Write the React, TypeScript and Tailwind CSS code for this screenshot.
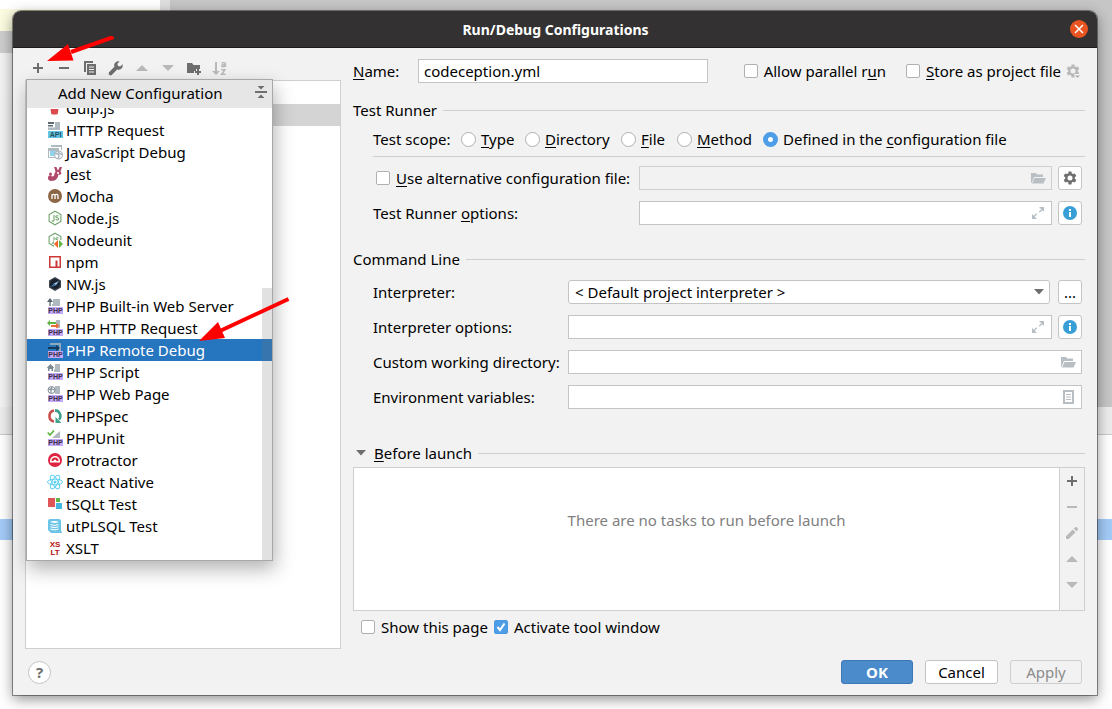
import type { ReactNode } from 'react';

function Svg({ children, className = '', size = 16 }: { children: ReactNode; className?: string; size?: number }) {
  return (
    <svg width={size} height={size} viewBox="0 0 16 16" fill="none" aria-hidden="true" className={`shrink-0 ${className}`}>
      {children}
    </svg>
  );
}

/* ---------- toolbar icons ---------- */

const PlusIcon = () => (
  <Svg><path d="M7 3h2v4h4v2H9v4H7V9H3V7h4z" fill="currentColor" /></Svg>
);
const MinusIcon = () => (
  <Svg><path d="M3 7h10v2H3z" fill="currentColor" /></Svg>
);
const CopyIcon = () => (
  <Svg>
    <path d="M2 1h9v2H4v9H2z" fill="currentColor" />
    <path fillRule="evenodd" d="M5 4h9v11H5zM7 6.5v1h5v-1zM7 9v1h5V9zM7 11.5v1h5v-1z" fill="currentColor" />
  </Svg>
);
const WrenchIcon = () => (
  <Svg>
    <path d="M14.5 4.3l-2.3 2.2-2.2-.6-.6-2.2 2.2-2.3a4.2 4.2 0 0 0-5.2 5.4L1.300 12a1.900 1.900 0 0 0 2.700 2.700L9.200 9.600a4.200 4.200 0 0 0 5.300-5.300z" fill="currentColor" />
  </Svg>
);
const UpIcon = () => (
  <Svg><path d="M8 5l6 6H2z" fill="currentColor" /></Svg>
);
const DownIcon = () => (
  <Svg><path d="M8 11L2 5h12z" fill="currentColor" /></Svg>
);
const FolderAddIcon = () => (
  <Svg>
    <path d="M1 3h5l1.500 2H14v4h-4v2H8v2H1z" fill="currentColor" />
    <path d="M11 9h2v2h2v2h-2v2h-2v-2H9v-2h2z" fill="currentColor" />
  </Svg>
);
const SortIcon = () => (
  <Svg>
    <path d="M3 2h2v9h3l-4 4-4-4h3z" fill="currentColor" />
    <path d="M9.500 2.700h2.800c.8 0 1.200.4 1.200 1.100V7M13.500 4.700h-2.700c-1.600 0-1.600 2 0 2 1.300 0 2.200-.5 2.700-1" stroke="currentColor" strokeWidth="1.400" />
    <path d="M9.300 9.700h3.700l-3.400 4.600h4" stroke="currentColor" strokeWidth="1.400" />
  </Svg>
);
const PencilIcon = () => (
  <Svg>
    <path d="M2 11.300V14h2.700l6.800-6.800-2.700-2.700zM9.800 3.500l2.700 2.700 1.300-1.300c.4-.4.4-1 0-1.400l-1.300-1.300c-.4-.4-1-.4-1.400 0z" fill="currentColor" />
  </Svg>
);
const FolderOpenIcon = () => (
  <Svg>
    <path d="M1 3h5l1 1.500h6V7H4l-2.500 6H1z" fill="#b7bfc4" />
    <path d="M4.500 8H16l-2.500 5.500H2z" fill="#b7bfc4" />
  </Svg>
);
const ExpandIcon = () => (
  <Svg>
    <path d="M9 2h5v5l-1.800-1.800-2.500 2.500-.9-.9 2.500-2.500zM7 14H2V9l1.800 1.800 2.500-2.500.9.900-2.500 2.500z" fill="#b7bfc4" />
  </Svg>
);
const DocumentIcon = () => (
  <Svg>
    <path fillRule="evenodd" d="M3 1h11v14H3zm2 2v10h7V3z" fill="#b7bfc4" />
    <path d="M6 5h5v1H6zm0 2.500h5v1H6zM6 10h5v1H6z" fill="#b7bfc4" />
  </Svg>
);
const GEAR = "M6.600 1.500h2.800l.4 1.900 1.200.7 1.900-.6 1.400 2.400-1.500 1.300v1.500l1.500 1.300-1.400 2.500-1.900-.7-1.200.8-.4 1.900H6.600l-.4-1.900-1.200-.8-1.900.7-1.400-2.500 1.500-1.300V7.200L1.700 5.900l1.400-2.400 1.900.6 1.200-.7zM8 5.500a2.500 2.500 0 1 0 0 5 2.500 2.500 0 0 0 0-5z";
const GearIcon = () => (
  <Svg><path fillRule="evenodd" d={GEAR} fill="#6e6e6e" /></Svg>
);
const GearMenuIcon = () => (
  <Svg>
    <path fillRule="evenodd" d={GEAR} fill="#b9b9b9" />
    <path d="M9 11h7v2l-3 3h-2z" fill="#f2f2f2" />
    <path d="M10 12.500h5l-2.500 2.500z" fill="#b0b0b0" />
  </Svg>
);
const InfoIcon = () => (
  <Svg>
    <circle cx="8" cy="8" r="7" fill="#389fd6" />
    <path d="M7 4h2v2H7zM7 7h2v5H7z" fill="#fff" />
  </Svg>
);

/* ---------- configuration type icons ---------- */

function PhpIcon({ children }: { children: ReactNode }) {
  return (
    <Svg>
      {children}
      <path d="M1 9h15v7H1z" fill="#c4a8fb" />
      <text x="8.500" y="15" textAnchor="middle" fontSize="7" fontWeight="700" fontFamily="Liberation Sans, sans-serif" fill="#3b3148">PHP</text>
    </Svg>
  );
}
const NODE_JS = (
  <>
    <path d="M8 1.200l5.900 3.400v6.800L8 14.800l-5.900-3.400V4.600z" stroke="#6fa56c" strokeWidth="1.100" />
    <path d="M7 5v5c0 1.300-1.200 1.500-2.300.7M11.500 6.200c-.8-.7-2.700-.7-2.700.5 0 1.400 2.800.8 2.800 2.200 0 1.300-2.200 1.300-3 .4" stroke="#6fa56c" strokeWidth="1.100" />
  </>
);

const icons: Record<string, ReactNode> = {
  gulp: <Svg><path d="M2.500 5h10l-.3 3H2.800z" fill="#db4b4d" /><path d="M3.500 9h8l-.8 5c-1 .8-5.400.8-6.400 0z" fill="#db4b4d" /></Svg>,
  http: (
    <Svg>
      <path d="M8 0h5v8H8z" fill="#aeb9c0" />
      <path d="M1 0h6v2H1zM1 3h5v1.500H1z" fill="#5d6a72" /><path d="M1 5.500h12V8H1z" fill="#aeb9c0" />
      <path d="M1 9h15v7H1z" fill="#62c3e3" />
      <text x="8.500" y="15" textAnchor="middle" fontSize="7" fontWeight="700" fontFamily="Liberation Sans, sans-serif" fill="#23505f">API</text>
    </Svg>
  ),
  jsdebug: (
    <Svg>
      <path d="M4 1h11v5h-1V3H4z" fill="#aeb9c0" />
      <path d="M1 4h11v3H2v6h6v1H1z" fill="#aeb9c0" />
      <path d="M3 7h6l-1.500 5H3z" fill="#8ed4ef" />
      <circle cx="11.500" cy="11" r="3.900" stroke="#aeb9c0" strokeWidth="1.200" fill="#fff" />
      <path d="M8 9.500l3 .5 1 2-1 2.500M12 7.500l-.5 1.500 2 1 2 .5" stroke="#aeb9c0" strokeWidth="1.500" />
    </Svg>
  ),
  jest: (
    <Svg>
      <path d="M7 1h8l-1.500 4.500 1 2-1.500 1.500-1.500-.8c-.4 3.800-2.500 6.300-6 6.600-2.600.5-5-.8-4.500-3.300.3-1.700 1.800-2.700 3.300-2 .2 1.300 1.700 1.300 2.700.2l.5-2.200L8.500 5.500z" fill="#b04a6c" />
      <path d="M9.300 1L11 4.500 12.700 1z" fill="#fff" />
      <circle cx="11" cy="7" r="1" fill="#fff" />
      <circle cx="3.500" cy="8" r="1.500" fill="#b04a6c" />
    </Svg>
  ),
  mocha: (
    <Svg>
      <circle cx="8" cy="8" r="7" fill="#8c6746" />
      <path d="M5 11V6.200M5 7.600c.4-1.600 3-1.700 3 .2V11M8 7.600c.4-1.600 3-1.700 3 .2V11" stroke="#fff" strokeWidth="1.300" />
    </Svg>
  ),
  node: <Svg>{NODE_JS}</Svg>,
  nodeunit: (
    <Svg>
      {NODE_JS}
      <path d="M7 8h9v8H7z" fill="#fff" />
      <path d="M11 8v8l-4-4z" fill="#f26522" /><path d="M12 8v8l4-4z" fill="#62b543" />
    </Svg>
  ),
  npm: <Svg><path fillRule="evenodd" d="M2 2h12v12H2zm1.500 1.500v9h5v-6h2v6h2v-9z" fill="#cb3837" /></Svg>,
  nw: (
    <Svg>
      <path d="M8 1l6 3.500v7L8 15l-6-3.500v-7z" fill="#3a434d" />
      <circle cx="8" cy="8" r="5" fill="#17202b" />
      <path d="M12 5L8.800 9.500 6.800 7.500z" fill="#8fc1ea" /><path d="M4 11l4.500-1.500-2-2z" fill="#3f76ac" />
    </Svg>
  ),
  phpServer: <PhpIcon><path d="M6 1h7v7H5V6h1z" fill="#aeb9c0" /><path d="M0 4l3-4 3 4H3.700v4H2.400V4z" fill="#59666e" /></PhpIcon>,
  phpHttp: <PhpIcon><path d="M9 0h4v8H9z" fill="#aeb9c0" /><path d="M0 3l3-3v2h6v2H3v2z" fill="#5eb543" /><path d="M4 5h5V3l3.500 3L9 8.500V7H4z" fill="#ee6a3a" /></PhpIcon>,
  phpRemote: <PhpIcon><path d="M3 1h11v8h-2V3H3z" fill="#8fa9ba" /><path d="M1 5h8V3l4 3-4 3V7H1z" fill="#153a55" /></PhpIcon>,
  phpScript: <PhpIcon><path d="M8 0h5v8H7V5h1z" fill="#aeb9c0" /><path d="M3.500 0L7 3.500 6 4.500V7H4.500V5h-2v2H1V4.500l-1-1z" fill="#7c8a93" /></PhpIcon>,
  phpWeb: (
    <PhpIcon>
      <path d="M8 0h5v8H8z" fill="#aeb9c0" />
      <circle cx="4.500" cy="4" r="3.500" fill="#fff" stroke="#7c8a93" />
      <path d="M1.500 3l2.500 1v3M5 1L4 2.500l3 1.500" stroke="#7c8a93" strokeWidth="1.200" />
    </PhpIcon>
  ),
  phpspec: (
    <Svg>
      <path d="M7 13.500A5.600 5.600 0 0 1 7 2.500" stroke="#cd4f4c" strokeWidth="2.600" />
      <path d="M8 2.400a5.600 5.600 0 0 1 4 9.300" stroke="#43a08d" strokeWidth="2.600" />
      <path d="M8.500 9v6h6z" fill="#43a08d" />
    </Svg>
  ),
  phpunit: <PhpIcon><path d="M13 1v7H5z" fill="#aeb9c0" /><path d="M.7 2.500L3 5l4-4.500" stroke="#5db642" strokeWidth="1.700" /></PhpIcon>,
  protractor: (
    <Svg>
      <circle cx="8" cy="8" r="7" fill="#de2340" />
      <path d="M3 9a5 5 0 0 1 10 0v1.500H3z" fill="#fff" />
      <path d="M4.500 9a3.500 3.500 0 0 1 7 0z" fill="#de2340" /><path d="M6.500 9a1.500 1.500 0 0 1 3 0z" fill="#fff" />
    </Svg>
  ),
  react: (
    <Svg>
      <g stroke="#5fd0f2" strokeWidth="1">
        <ellipse cx="8" cy="8" rx="7.500" ry="2.900" />
        <ellipse cx="8" cy="8" rx="7.500" ry="2.900" transform="rotate(60 8 8)" />
        <ellipse cx="8" cy="8" rx="7.500" ry="2.900" transform="rotate(120 8 8)" />
      </g>
      <circle cx="8" cy="8" r="1.500" fill="#5fd0f2" />
    </Svg>
  ),
  tsqlt: <Svg><path d="M1 2h7v9H1z" fill="#e05555" /><path d="M9 2h4v4H9z" fill="#62b543" /><path d="M9 7h6v6H9z" fill="#40b6e0" /></Svg>,
  utplsql: (
    <Svg>
      <path d="M3 1h9a2 2 0 0 1 2 2v9l1 3H4l-3-3V3a2 2 0 0 1 2-2z" fill="#6cc5e8" />
      <path d="M3.500 4c1.500-1.300 6.500-1.300 8 0-1.500 1.200-6.500 1.200-8 0zM3.500 6c2 1 6 1 8 0v1c-2 1-6 1-8 0zM3.500 8.300c2 1 6 1 8 0v1c-2 1-6 1-8 0zM3.500 10.600c2 1 6 1 8 0v1c-2 1-6 1-8 0z" fill="#fff" />
    </Svg>
  ),
  xslt: (
    <Svg>
      <g fontSize="8" fontWeight="700" fontFamily="Liberation Sans, sans-serif" fill="#b80f0f" textAnchor="middle">
        <text x="8" y="7">XS</text><text x="8" y="15">LT</text>
      </g>
    </Svg>
  ),
};

const configurations: [string, string][] = [
  ['gulp', 'Gulp.js'],
  ['http', 'HTTP Request'],
  ['jsdebug', 'JavaScript Debug'],
  ['jest', 'Jest'],
  ['mocha', 'Mocha'],
  ['node', 'Node.js'],
  ['nodeunit', 'Nodeunit'],
  ['npm', 'npm'],
  ['nw', 'NW.js'],
  ['phpServer', 'PHP Built-in Web Server'],
  ['phpHttp', 'PHP HTTP Request'],
  ['phpRemote', 'PHP Remote Debug'],
  ['phpScript', 'PHP Script'],
  ['phpWeb', 'PHP Web Page'],
  ['phpspec', 'PHPSpec'],
  ['phpunit', 'PHPUnit'],
  ['protractor', 'Protractor'],
  ['react', 'React Native'],
  ['tsqlt', 'tSQLt Test'],
  ['utplsql', 'utPLSQL Test'],
  ['xslt', 'XSLT'],
];

/* ---------- form parts ---------- */

/** Label text with its mnemonic letter underlined. */
function Mnemonic({ text, at }: { text: string; at: number }) {
  return (
    <span className="whitespace-nowrap">
      {text.slice(0, at)}
      <span className="underline decoration-1 underline-offset-2">{text[at]}</span>
      {text.slice(at + 1)}
    </span>
  );
}

function Check({ children, checked = false }: { children: ReactNode; checked?: boolean }) {
  return (
    <label className="flex items-center gap-1.5">
      <span className="grid">
        <input type="checkbox" defaultChecked={checked} className="peer col-start-1 row-start-1 size-3.5 appearance-none rounded-xs border border-[#b0b0b0] bg-white checked:border-[#4a98e2] checked:bg-[#4e9de7]" />
        <svg viewBox="0 0 14 14" className="pointer-events-none col-start-1 row-start-1 size-3.5 opacity-0 peer-checked:opacity-100" fill="none" aria-hidden="true">
          <path d="M3.500 7l2.500 3 4.500-6.500" stroke="#fff" strokeWidth="2" />
        </svg>
      </span>
      {children}
    </label>
  );
}

function Scope({ text, at, checked = false }: { text: string; at: number; checked?: boolean }) {
  return (
    <label className="flex items-center gap-[5px]">
      <input type="radio" name="scope" defaultChecked={checked} className="size-[15px] appearance-none rounded-full border border-[#b0b0b0] bg-white checked:border-[5px] checked:border-[#4e9de7]" />
      <Mnemonic text={text} at={at} />
    </label>
  );
}

function Section({ children }: { children: ReactNode }) {
  return (
    <div className="flex h-5 items-center gap-1.5">
      <h2 className="flex items-center whitespace-nowrap">{children}</h2>
      <span className="h-px flex-1 bg-[#cfcfcf]" />
    </div>
  );
}

function Field({ id, label, icon, disabled = false }: { id: string; label: string; icon: ReactNode; disabled?: boolean }) {
  return (
    <div className={`flex h-6 min-w-0 flex-1 items-center border pr-[5px] ${disabled ? 'border-[#cfcfcf]' : 'border-[#c4c4c4] bg-white'}`}>
      <input id={id} aria-label={label} disabled={disabled} className="h-full min-w-0 flex-1 bg-transparent px-1.5 outline-none" />
      {icon}
    </div>
  );
}

function SquareButton({ label, children }: { label: string; children: ReactNode }) {
  return (
    <button type="button" aria-label={label} className="flex size-6 shrink-0 items-center justify-center rounded-[3px] border border-[#c4c4c4] bg-white">
      {children}
    </button>
  );
}

function ToolButton({ label, children, disabled = false }: { label: string; children: ReactNode; disabled?: boolean }) {
  return (
    <button type="button" aria-label={label} disabled={disabled} className="flex size-[26px] items-center justify-center text-[#6e6e6e] disabled:text-[#b9b9b9]">
      {children}
    </button>
  );
}

/* ---------- panels ---------- */

function Backdrop() {
  return (
    <div className="absolute inset-0 flex flex-col bg-[#f5f5f5]" aria-hidden="true">
      <div className="flex h-[407px]">
        <div className="flex w-40 flex-col bg-[#f2f2f2]">
          <div className="h-[9px] bg-white" />
          <div className="h-[22px] bg-[#fbfbe0]" />
          <div className="h-[22px] bg-[#cdcdcd]" />
        </div>
        <div className="w-2.5 bg-[#dedede]" />
        <div className="flex-1 bg-[#c6c6c6]" />
      </div>
      <div className="h-7 border-b border-[#c9c9c9] bg-[#ececec]" />
      <div className="h-[84px] bg-white" />
      <div className="h-[21px] bg-[#a3cbf7]" />
      <div className="flex-1 bg-white" />
    </div>
  );
}

function NewConfigurationPopup() {
  return (
    <div className="absolute top-[31px] left-px z-10 flex h-[482px] w-[247px] flex-col border border-[#a8a8a8] bg-white shadow-[2px_8px_18px_rgba(0,0,0,0.3)]">
      <div className="flex h-7 shrink-0 items-center bg-[#e6e6e6]">
        <h2 className="flex-1 pb-0.5 pl-[31px] whitespace-nowrap">Add New Configuration</h2>
        <button type="button" aria-label="Collapse" className="mr-[3px] mb-1 text-[#6e6e6e]">
          <Svg>
            <path d="M2 7h12v2H2zM4.500 2h7L8 5.500zM4.500 14h7L8 10.500z" fill="currentColor" />
          </Svg>
        </button>
      </div>
      <div className="relative flex min-h-0 flex-1 flex-col justify-end overflow-hidden">
        <ul className="pb-px">
          {configurations.map(([icon, name]) => (
            <li key={icon} className={`flex h-[22px] items-center gap-[3px] pl-5 whitespace-nowrap ${icon === 'phpRemote' ? 'bg-[#2675bf] text-white' : ''}`}>
              {icons[icon]}
              {name}
            </li>
          ))}
        </ul>
        <div className="absolute right-0 bottom-0 h-[272px] w-2.5 bg-[#777]/22" />
      </div>
    </div>
  );
}

function Sidebar() {
  return (
    <div className="relative flex w-[316px] shrink-0 flex-col">
      <div className="flex h-8 items-start pt-[7px]">
        <ToolButton label="Add"><PlusIcon /></ToolButton>
        <ToolButton label="Remove"><MinusIcon /></ToolButton>
        <ToolButton label="Copy"><CopyIcon /></ToolButton>
        <ToolButton label="Edit templates"><WrenchIcon /></ToolButton>
        <ToolButton label="Move up" disabled><UpIcon /></ToolButton>
        <ToolButton label="Move down" disabled><DownIcon /></ToolButton>
        <ToolButton label="New folder"><FolderAddIcon /></ToolButton>
        <ToolButton label="Sort" disabled><SortIcon /></ToolButton>
      </div>
      <div className="flex-1 border border-[#cfcfcf] bg-white pt-[23px]">
        <div className="h-[22px] bg-[#d4d4d4]" />
      </div>
      <NewConfigurationPopup />
      <svg className="pointer-events-none absolute -top-3 left-[22px] z-20" width="68" height="28" fill="none" aria-hidden="true">
        <path d="M66.500 1L24 16" stroke="#ff0000" strokeWidth="4" />
        <path d="M0 25L21 8l5.500 16.500z" fill="#ff0000" />
      </svg>
      <svg className="pointer-events-none absolute top-[249px] left-[174px] z-20" width="92" height="46" fill="none" aria-hidden="true">
        <path d="M89.500 2L22 33.500" stroke="#ff0000" strokeWidth="4" />
        <path d="M0 44L19 25l7 16z" fill="#ff0000" />
      </svg>
    </div>
  );
}

export default function App() {
  return (
    <div className="relative flex min-h-screen pt-[11px] pr-[15px] pb-[14px] pl-[13px] font-['Noto_Sans',sans-serif] text-[15px] leading-5 text-black">
      <Backdrop />
      <main className="relative flex flex-1 flex-col rounded-t-lg bg-[#f2f2f2] shadow-[0_0_0_1px_rgba(0,0,0,0.4),0_4px_14px_rgba(0,0,0,0.45)]">
        <header className="flex h-[37px] items-center rounded-t-lg border-b border-[#1d1b1b] bg-[#333131] pr-[9px] pl-7 text-white">
          <h1 className="flex-1 pt-0.5 text-center text-[14px] font-bold">Run/Debug Configurations</h1>
          <button type="button" aria-label="Close" className="flex size-[18px] items-center justify-center rounded-full bg-[#e95420]">
            <svg width="10" height="10" fill="none" aria-hidden="true"><path d="M1 1l8 8M9 1L1 9" stroke="#fff" strokeWidth="1.500" /></svg>
          </button>
        </header>

        <div className="flex flex-1 gap-3 px-3">
          <Sidebar />

          <form className="flex min-w-0 flex-1 flex-col pt-[11px]">
            <div className="flex items-center pr-1">
              <label htmlFor="name" className="w-[65px]"><Mnemonic text="Name:" at={0} /></label>
              <input id="name" defaultValue="codeception.yml" className="h-6 w-[290px] border border-[#c4c4c4] bg-white px-[5px] outline-none" />
              <div className="ml-auto flex items-center gap-5">
                <Check><Mnemonic text="Allow parallel run" at={16} /></Check>
                <div className="flex items-center gap-1">
                  <Check><Mnemonic text="Store as project file" at={0} /></Check>
                  <button type="button" aria-label="Storage options"><GearMenuIcon /></button>
                </div>
              </div>
            </div>

            <section className="mt-[17px]">
              <Section>Test Runner</Section>
              <div className="pl-5">
                <div className="mt-2 grid h-[22px] grid-cols-[88px_64px_96px_56px_86px_1fr] items-center">
                  <span>Test scope:</span>
                  <Scope text="Type" at={0} />
                  <Scope text="Directory" at={0} />
                  <Scope text="File" at={0} />
                  <Scope text="Method" at={0} />
                  <Scope text="Defined in the configuration file" at={15} checked />
                </div>
                <hr className="mt-1.5 border-[#cfcfcf]" />
                <div className="mt-[9px] grid grid-cols-[266px_1fr] items-center gap-y-[11px] pr-[3px]">
                  <div className="pl-[3px]"><Check><Mnemonic text="Use alternative configuration file:" at={0} /></Check></div>
                  <div className="flex gap-1.5">
                    <Field id="alt" label="Alternative configuration file" icon={<FolderOpenIcon />} disabled />
                    <SquareButton label="Settings"><GearIcon /></SquareButton>
                  </div>
                  <label htmlFor="options"><Mnemonic text="Test Runner options:" at={12} /></label>
                  <div className="flex gap-1.5">
                    <Field id="options" label="Test Runner options" icon={<ExpandIcon />} />
                    <SquareButton label="Options help"><InfoIcon /></SquareButton>
                  </div>
                </div>
              </div>
            </section>

            <section className="mt-6">
              <Section>Command Line</Section>
              <div className="mt-[11px] grid grid-cols-[195px_1fr] items-center gap-y-[11px] pr-[3px] pl-5">
                <label htmlFor="interpreter">Interpreter:</label>
                <div className="flex gap-2">
                  <div className="grid min-w-0 flex-1 items-center">
                    <select id="interpreter" className="col-start-1 row-start-1 h-6 w-full appearance-none rounded-[3px] border border-[#c4c4c4] bg-white px-1.5 leading-5">
                      <option>&lt; Default project interpreter &gt;</option>
                    </select>
                    <svg className="pointer-events-none col-start-1 row-start-1 mr-1.5 justify-self-end" width="10" height="6" aria-hidden="true"><path d="M0 0h10L5 5.500z" fill="#6e6e6e" /></svg>
                  </div>
                  <SquareButton label="Browse interpreters">...</SquareButton>
                </div>
                <label htmlFor="interpreter-options">Interpreter options:</label>
                <div className="flex gap-1.5">
                  <Field id="interpreter-options" label="Interpreter options" icon={<ExpandIcon />} />
                  <SquareButton label="Interpreter help"><InfoIcon /></SquareButton>
                </div>
                <label htmlFor="directory" className="whitespace-nowrap">Custom working directory:</label>
                <Field id="directory" label="Custom working directory" icon={<FolderOpenIcon />} />
                <label htmlFor="environment">Environment variables:</label>
                <Field id="environment" label="Environment variables" icon={<DocumentIcon />} />
              </div>
            </section>

            <section className="mt-[34px] flex flex-1 flex-col">
              <Section>
                <svg className="mr-2 ml-[3px]" width="10" height="6" aria-hidden="true"><path d="M0 0h10L5 5.500z" fill="#6e6e6e" /></svg>
                <Mnemonic text="Before launch" at={0} />
              </Section>
              <div className="mt-1 flex flex-1 border border-[#cfcfcf]">
                <p className="flex-1 bg-white pt-[42px] text-center text-[#808080]">There are no tasks to run before launch</p>
                <div className="flex w-[25px] flex-col items-center border-l border-[#cfcfcf]">
                  <ToolButton label="Add task"><PlusIcon /></ToolButton>
                  <ToolButton label="Remove task" disabled><MinusIcon /></ToolButton>
                  <ToolButton label="Edit task" disabled><PencilIcon /></ToolButton>
                  <ToolButton label="Move task up" disabled><UpIcon /></ToolButton>
                  <ToolButton label="Move task down" disabled><DownIcon /></ToolButton>
                </div>
              </div>
              <div className="mb-1.5 flex h-8 items-center gap-1.5 pl-2">
                <Check>Show this page</Check>
                <Check checked>Activate tool window</Check>
              </div>
            </section>
          </form>
        </div>

        <footer className="flex h-[46px] items-center gap-3 pr-[15px] pl-[15px]">
          <button type="button" aria-label="Help" className="mr-auto flex size-[23px] items-center justify-center rounded-full border border-[#c4c4c4] bg-white font-bold text-[#6e6e6e]">?</button>
          <button type="button" className="h-6 w-[72px] rounded-[3px] border border-[#3f78b5] bg-[#4b8acb] font-bold text-white">OK</button>
          <button type="button" className="h-6 w-[73px] rounded-[3px] border border-[#c4c4c4] bg-white">Cancel</button>
          <button type="button" disabled className="h-6 w-[72px] rounded-[3px] border border-[#cfcfcf] text-[#8c8c8c]">Apply</button>
        </footer>
      </main>
    </div>
  );
}
